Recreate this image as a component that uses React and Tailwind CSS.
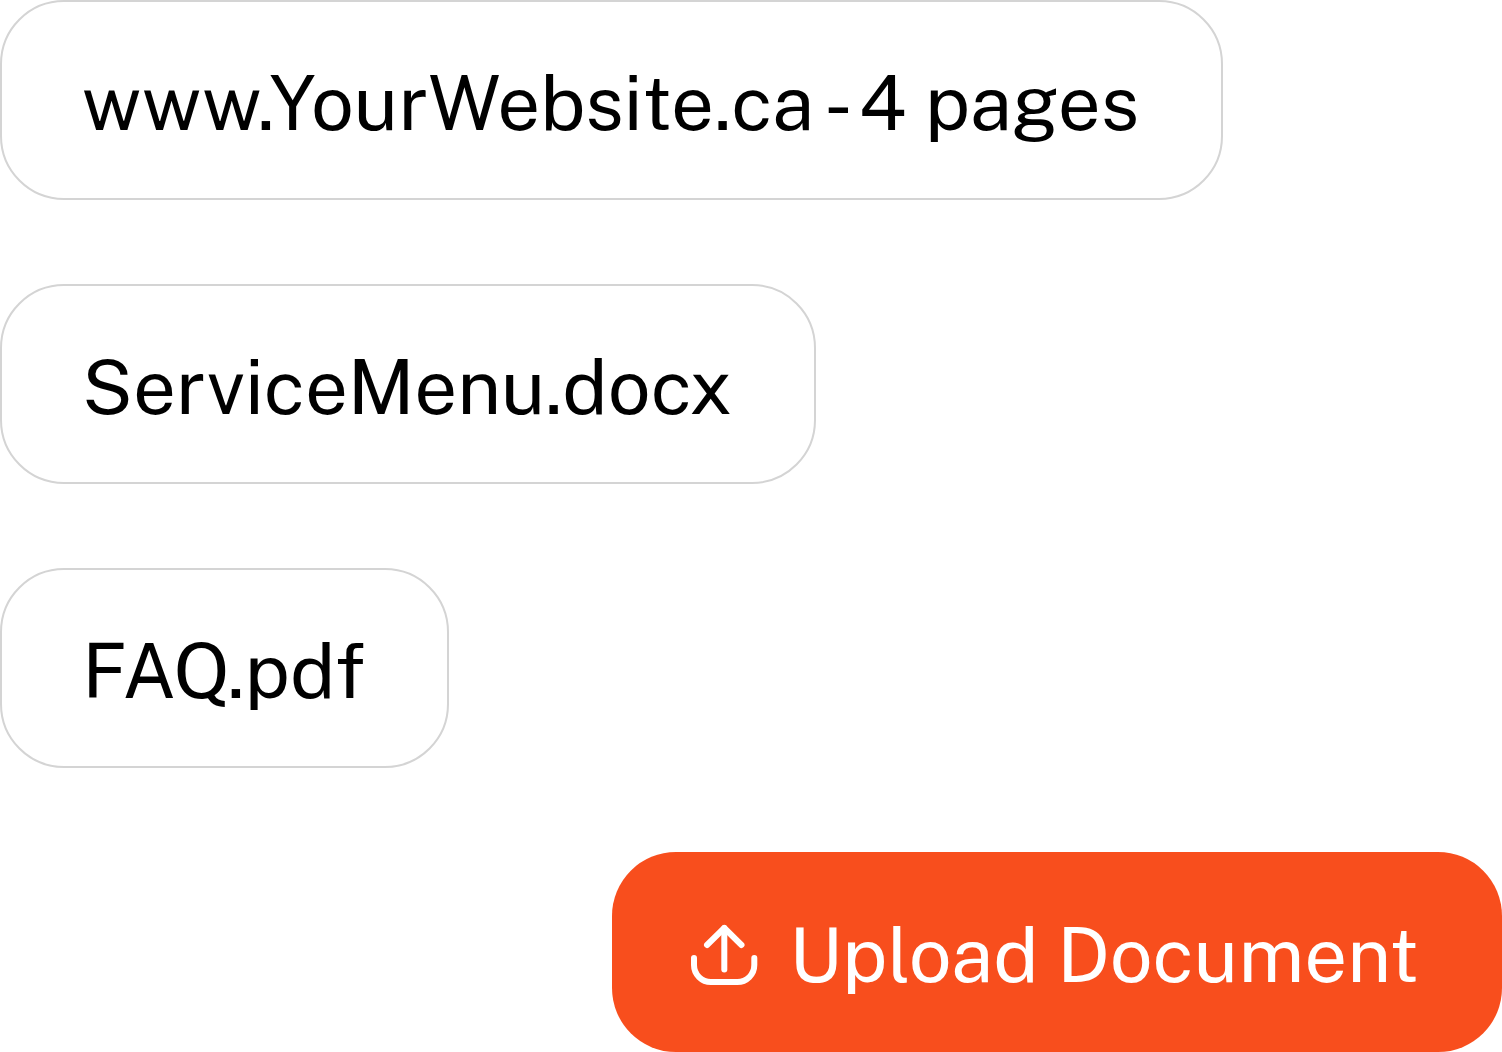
import React from 'react';

const sources = [
  { name: 'www.YourWebsite.ca - 4 pages' },
  { name: 'ServiceMenu.docx' },
  { name: 'FAQ.pdf' }
];

const UploadIcon = () => (
  <svg
    className="w-[68px] h-[62px] shrink-0"
    viewBox="0 0 68 62"
    fill="none"
    stroke="currentColor"
    strokeWidth="6"
    strokeLinecap="round"
    strokeLinejoin="round"
    aria-hidden="true"
  >
    <path d="M34.3 45.5V4" />
    <path d="M17 21L34.3 4L51.5 21" />
    <path d="M4 34V41A17 17 0 0 0 21 58H47.3A17 17 0 0 0 64.3 41V34" />
  </svg>
);

const App = () => {
  return (
    <main className="flex flex-col gap-[84px] bg-white font-['Public_Sans','Open_Sans',sans-serif] text-[76px] leading-[116px] text-black">
      {/* Knowledge sources */}
      <ul className="flex flex-col items-start gap-[84px]">
        {sources.map((source) => (
          <li
            key={source.name}
            className="rounded-[64px] border-2 border-[#d4d4d4] pt-[43px] pr-[82px] pb-[37px] pl-20 whitespace-nowrap"
          >
            {source.name}
          </li>
        ))}
      </ul>

      <button
        type="button"
        className="flex items-center gap-[31px] self-end rounded-[64px] bg-[#f84e1d] pt-[45px] pr-[83px] pb-[39px] pl-[78px] text-white whitespace-nowrap"
      >
        <UploadIcon />
        Upload Document
      </button>
    </main>
  );
};

export default App;
